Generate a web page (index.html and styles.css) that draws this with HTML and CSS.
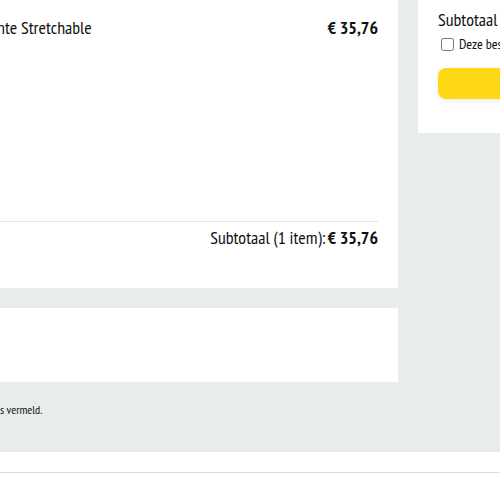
FILE: index.html
```
<!DOCTYPE html>
<html lang="nl">
<head>
<meta charset="utf-8">
<meta name="viewport" content="width=device-width, initial-scale=1">
<title>Winkelwagen</title>
<link rel="stylesheet" href="styles.css">
</head>
<body>
<main class="page">
  <div class="main-column">
    <section class="card cart">
      <div class="cart-item">
        <span class="item-name">nte Stretchable</span>
        <strong>€ 35,76</strong>
      </div>
      <p class="cart-total"><span>Subtotaal (1 item):</span> <strong>€ 35,76</strong></p>
    </section>
    <section class="card saved"></section>
    <p class="note">s vermeld.</p>
  </div>
  <aside class="card checkout">
    <p class="checkout-total">Subtotaal</p>
    <label class="gift"><input type="checkbox"><span>Deze bes</span></label>
    <button class="pay" type="button" aria-label="Doorgaan naar bestellen"></button>
  </aside>
</main>
<footer class="footer"></footer>
</body>
</html>
```
FILE: styles.css
```
* {
  box-sizing: border-box;
}

body {
  margin: 0;
  overflow-x: hidden;
  background: #fff;
  color: #0f1111;
  font: 18px/24px "PT Sans Narrow", "Liberation Sans Narrow", "Liberation Sans", sans-serif;
}

p {
  margin: 0;
}

.page {
  display: grid;
  grid-template-columns: minmax(0, 1fr) 82px;
  gap: 20px;
  align-items: start;
  padding-bottom: 34px;
  background: #e8ecec;
}

.card {
  background: #fff;
}

.cart {
  padding: 16px 20px 38px 0;
}

.cart-item {
  display: flex;
  justify-content: space-between;
  min-height: 205px;
}

.item-name {
  margin-left: -3px;
}

.cart-total {
  display: flex;
  justify-content: flex-end;
  gap: 2px;
  padding-top: 4px;
  border-top: 1px solid #e3e6e6;
}

.saved {
  min-height: 74px;
  margin-top: 20px;
}

.note {
  padding-top: 20px;
  font-size: 12px;
  line-height: 16px;
}

.checkout {
  padding: 8px 0 34px 20px;
  overflow: hidden;
  white-space: nowrap;
}

.gift {
  display: flex;
  align-items: center;
  gap: 5px;
  font-size: 14px;
}

.gift input {
  flex: none;
  width: 13px;
  height: 13px;
  margin: 0 0 0 3px;
}

.pay {
  display: block;
  width: 100%;
  height: 31px;
  margin-top: 12px;
  border: 0;
  border-radius: 8px 0 0 8px;
  background: #ffd814;
  box-shadow: 0 2px 5px rgba(213, 217, 217, 0.5);
}

.footer {
  margin-top: 20px;
  border-top: 1px solid #ddd;
}
```
